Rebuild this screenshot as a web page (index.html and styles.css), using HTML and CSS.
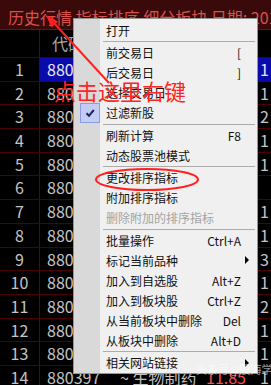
FILE: index.html
```html
<!DOCTYPE html>
<html lang="zh">
<head>
<meta charset="utf-8">
<link rel="stylesheet" href="styles.css">
</head>
<body>
<div class="screen">
  <div class="topbar">历史行情 指标排序 细分板块 日期: 2018-03-09</div>
  <div class="table">
    <div class="row head"><div class="c num"></div><div class="c code hd">代码</div><div class="c name">名称</div><div class="c val">涨幅%</div><div class="c last"></div></div>
    <div class="row sel"><div class="c num">1</div><div class="c code">880301</div><div class="c name">煤炭开采</div><div class="c val up">3.21</div><div class="c last">1</div></div>
    <div class="row"><div class="c num">2</div><div class="c code">880302</div><div class="c name">焦炭加工</div><div class="c val up">2.85</div><div class="c last">1</div></div>
    <div class="row"><div class="c num">3</div><div class="c code">880305</div><div class="c name">电力</div><div class="c val up">2.40</div><div class="c last">2</div></div>
    <div class="row"><div class="c num">4</div><div class="c code">880310</div><div class="c name">石油</div><div class="c val up">2.12</div><div class="c last">1</div></div>
    <div class="row"><div class="c num">5</div><div class="c code">880318</div><div class="c name">钢铁</div><div class="c val up">1.98</div><div class="c last">1</div></div>
    <div class="row"><div class="c num">6</div><div class="c code">880324</div><div class="c name">有色</div><div class="c val up">1.77</div><div class="c last"></div></div>
    <div class="row"><div class="c num">7</div><div class="c code">880330</div><div class="c name">化工</div><div class="c val up">1.63</div><div class="c last">1</div></div>
    <div class="row"><div class="c num">8</div><div class="c code">880335</div><div class="c name">化纤</div><div class="c val up">1.51</div><div class="c last">1</div></div>
    <div class="row"><div class="c num">9</div><div class="c code">880344</div><div class="c name">建材</div><div class="c val up">1.42</div><div class="c last">3</div></div>
    <div class="row"><div class="c num">10</div><div class="c code">880350</div><div class="c name">造纸</div><div class="c val up">1.30</div><div class="c last">1</div></div>
    <div class="row"><div class="c num">11</div><div class="c code">880360</div><div class="c name">农林牧渔</div><div class="c val up">1.22</div><div class="c last">2</div></div>
    <div class="row"><div class="c num">12</div><div class="c code">880372</div><div class="c name">食品饮料</div><div class="c val up">1.15</div><div class="c last">1</div></div>
    <div class="row"><div class="c num">13</div><div class="c code">880380</div><div class="c name">酿酒</div><div class="c val up">1.08</div><div class="c last">1</div></div>
    <div class="row"><div class="c num">14</div><div class="c code">880397</div><div class="c name">~ 生物制药</div><div class="c val up">11.85</div><div class="c last">1</div></div>
  </div>

  <div class="menu">
    <div class="mi"><span class="ico"></span><span class="lbl">打开</span><span class="key"></span><span class="arr"></span></div>
    <div class="sep"></div>
    <div class="mi"><span class="ico"></span><span class="lbl">前交易日</span><span class="key">[</span><span class="arr"></span></div>
    <div class="mi"><span class="ico"></span><span class="lbl">后交易日</span><span class="key">]</span><span class="arr"></span></div>
    <div class="mi"><span class="ico"></span><span class="lbl">选择交易日</span><span class="key"></span><span class="arr"></span></div>
    <div class="mi"><span class="ico on"><svg width="12" height="12" viewBox="0 0 12 12"><path d="M2.5 6.2 L5 8.8 L9.8 3" fill="none" stroke="#1c2660" stroke-width="2"/></svg></span><span class="lbl">过滤新股</span><span class="key"></span><span class="arr"></span></div>
    <div class="sep"></div>
    <div class="mi"><span class="ico"></span><span class="lbl">刷新计算</span><span class="key">F8</span><span class="arr"></span></div>
    <div class="mi"><span class="ico"></span><span class="lbl">动态股票池模式</span><span class="key"></span><span class="arr"></span></div>
    <div class="sep"></div>
    <div class="mi"><span class="ico"></span><span class="lbl">更改排序指标</span><span class="key"></span><span class="arr"></span></div>
    <div class="mi"><span class="ico"></span><span class="lbl">附加排序指标</span><span class="key"></span><span class="arr"></span></div>
    <div class="mi dis"><span class="ico"></span><span class="lbl">删除附加的排序指标</span><span class="key"></span><span class="arr"></span></div>
    <div class="sep"></div>
    <div class="mi"><span class="ico"></span><span class="lbl">批量操作</span><span class="key">Ctrl+A</span><span class="arr"></span></div>
    <div class="mi"><span class="ico"></span><span class="lbl">标记当前品种</span><span class="key"></span><span class="arr sub"></span></div>
    <div class="mi"><span class="ico"></span><span class="lbl">加入到自选股</span><span class="key">Alt+Z</span><span class="arr"></span></div>
    <div class="mi"><span class="ico"></span><span class="lbl">加入到板块股</span><span class="key">Ctrl+Z</span><span class="arr"></span></div>
    <div class="mi"><span class="ico"></span><span class="lbl">从当前板块中删除</span><span class="key">Del</span><span class="arr"></span></div>
    <div class="mi"><span class="ico"></span><span class="lbl">从板块中删除</span><span class="key">Alt+D</span><span class="arr"></span></div>
    <div class="sep"></div>
    <div class="mi"><span class="ico"></span><span class="lbl">相关网站链接</span><span class="key"></span><span class="arr sub"></span></div>
  </div>

  <svg class="annot" width="271" height="385" viewBox="0 0 271 385">
    <line x1="109" y1="83" x2="54" y2="23" stroke="#ff2020" stroke-width="2"/>
    <polygon points="46,15 58.1,21.4 51.5,27.6" fill="#ff2020"/>
    <ellipse cx="147" cy="179.5" rx="51" ry="10.5" fill="none" stroke="#ff2020" stroke-width="2"/>
  </svg>
  <div class="tip">点击这里右键</div>
  <div class="wm">头条号@股海学堂8</div>
</div>
</body>
</html>
```

FILE: styles.css
```css
html, body {
  margin: 0;
  padding: 0;
  background: #000;
}
body {
  width: 271px;
  height: 385px;
  overflow: hidden;
  font-family: "Noto Sans CJK SC", "Noto Sans", sans-serif;
}
.screen {
  position: relative;
  width: 271px;
  height: 385px;
  overflow: hidden;
  background: #000;
}
.topbar {
  box-sizing: border-box;
  height: 30px;
  padding: 5px 0 0 8px;
  line-height: 24px;
  font-size: 16px;
  color: #d9514f;
  background: #3a0909;
  border-bottom: 1px solid #6b1212;
  white-space: nowrap;
  overflow: hidden;
}
.table {
  display: flex;
  flex-direction: column;
}
.row {
  display: flex;
  box-sizing: border-box;
  height: 23.7px;
  border-bottom: 1px solid #4c0202;
  font-size: 16px;
  line-height: 22.7px;
  color: #c4c4c4;
  white-space: nowrap;
}
.row.head {
  height: 28px;
  line-height: 27px;
  color: #a9a9a9;
}
.c {
  box-sizing: border-box;
  overflow: hidden;
}
.num {
  width: 40px;
  flex: none;
  text-align: center;
  border-right: 1px solid #5a0606;
}
.code {
  width: 78px;
  flex: none;
  padding-left: 7px;
}
.code.hd {
  padding-left: 12px;
}
.name {
  width: 86px;
  flex: none;
  padding-left: 2px;
}
.val {
  width: 46px;
  flex: none;
  padding-right: 4px;
  text-align: right;
}
.val.up {
  color: #ff5050;
}
.last {
  flex: 1;
  padding-left: 10px;
}
.row.sel .code,
.row.sel .name,
.row.sel .val,
.row.sel .last {
  background: #0b0bab;
  color: #e6e6f4;
}

/* context menu (floats over the table) */
.menu {
  position: absolute;
  left: 73px;
  top: 18px;
  width: 185px;
  box-sizing: border-box;
  padding: 1px 0 0;
  border: 1px solid #979797;
  background: linear-gradient(to right, #d9d9d9 0, #d9d9d9 26px, #f0f0f0 26px);
  font-size: 12px;
  color: #111;
}
.mi {
  display: flex;
  align-items: center;
  height: 20px;
  padding-left: 6px;
  white-space: nowrap;
}
.ico {
  flex: none;
  width: 20px;
  height: 20px;
  margin-right: 6px;
  box-sizing: border-box;
  display: flex;
  align-items: center;
  justify-content: center;
}
.ico.on {
  background: #c3ccf2;
  border: 1px solid #8d9be2;
}
.lbl {
  flex: 1;
}
.key {
  text-align: right;
}
.arr {
  flex: none;
  width: 16px;
  height: 20px;
  position: relative;
}
.arr.sub::after {
  content: "";
  position: absolute;
  left: 4px;
  top: 6px;
  border-left: 4px solid #000;
  border-top: 4px solid transparent;
  border-bottom: 4px solid transparent;
}
.mi.dis {
  color: #a3a3a3;
}
.sep {
  height: 1px;
  margin: 1px 2px 0.6px 29px;
  background: #acacac;
}

/* annotations drawn over the screenshot */
.annot {
  position: absolute;
  left: 0;
  top: 0;
  pointer-events: none;
}
.tip {
  position: absolute;
  left: 54px;
  top: 78px;
  font-size: 22px;
  line-height: 24px;
  color: #ff2424;
  white-space: nowrap;
}
.wm {
  position: absolute;
  left: 196px;
  top: 363px;
  font-size: 11px;
  line-height: 13px;
  color: rgba(255, 255, 255, 0.6);
  white-space: nowrap;
}
```
